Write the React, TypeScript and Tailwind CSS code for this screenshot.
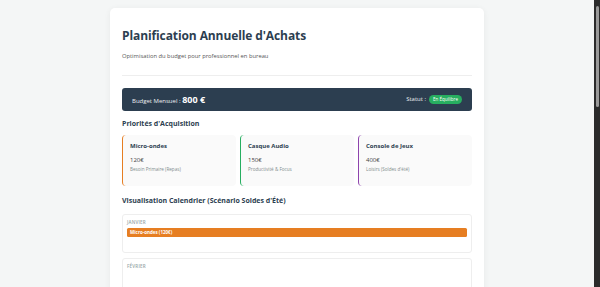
const priorities = [
  { name: 'Micro-ondes', price: '120€', note: 'Besoin Primaire (Repas)', border: 'border-[#e67e22]' },
  { name: 'Casque Audio', price: '150€', note: 'Productivité & Focus', border: 'border-[#27ae60]' },
  { name: 'Console de Jeux', price: '400€', note: 'Loisirs (Soldes d\'été)', border: 'border-[#8e44ad]' },
]

function MonthBox({ label, children }: { label: string; children?: React.ReactNode }) {
  return (
    <div className="h-[39px] rounded-[3px] border border-[#eeeeee] bg-white px-[4px] pt-[5.5px]">
      <div className="text-[4.5px] font-semibold uppercase leading-none tracking-[0.2px] text-[#95a5a6]">{label}</div>
      {children}
    </div>
  )
}

export default function App() {
  return (
    <div className="flex h-[287px] w-[600px] overflow-hidden font-['Open_Sans',sans-serif]">
      <div className="flex-1 overflow-hidden bg-[#f4f6f6] pt-[8px]">
        <div className="mx-auto w-[374px] rounded-[5px] bg-white px-[12px] pt-[22px] pb-[20px] shadow-[0_1px_6px_rgba(0,0,0,0.06)]">
          {/* Header */}
          <div className="border-b border-[#eeeeee] pb-[15px]">
            <h1 className="text-[12px] font-bold leading-none tracking-[-0.1px] text-[#2c3e50]">
              Planification Annuelle d'Achats
            </h1>
            <p className="mt-[12px] text-[5.8px] leading-none text-[#555555]">
              Optimisation du budget pour professionnel en bureau
            </p>
          </div>

          {/* Budget banner */}
          <div className="mt-[12px] flex h-[23px] items-center justify-between rounded-[3px] bg-[#2c3e50] px-[10px] text-white">
            <div className="flex items-baseline text-[6px] text-[#ecf0f1]">
              Budget Mensuel :&nbsp;<span className="text-[9px] font-bold text-white">800 €</span>
            </div>
            <div className="flex items-center gap-[3px] text-[6px] text-[#ecf0f1]">
              Statut :
              <span className="flex h-[9px] items-center rounded-full bg-[#27ae60] px-[4px] text-[4.5px] text-white">
                En Équilibre
              </span>
            </div>
          </div>

          {/* Priorities */}
          <h2 className="mt-[9.5px] text-[7px] font-bold leading-none text-[#2c3e50]">Priorités d'Acquisition</h2>
          <div className="mt-[7.5px] grid grid-cols-3 gap-[4px]">
            {priorities.map((p) => (
              <div key={p.name} className={`h-[51px] rounded-[4px] border-l-[1.5px] bg-[#fafafa] pl-[7px] pt-[8px] ${p.border}`}>
                <div className="text-[6px] font-bold leading-none text-[#2c3e50]">{p.name}</div>
                <div className="mt-[8px] text-[6px] leading-none text-[#444444]">{p.price}</div>
                <div className="mt-[3.75px] text-[4.6px] leading-none text-[#7f8c8d]">{p.note}</div>
              </div>
            ))}
          </div>

          {/* Calendar */}
          <h2 className="mt-[11.5px] text-[7px] font-bold leading-none text-[#2c3e50]">
            Visualisation Calendrier (Scénario Soldes d'Été)
          </h2>
          <div className="mt-[9.5px] flex flex-col gap-[5px]">
            <MonthBox label="Janvier">
              <div className="mt-[3px] flex h-[9px] items-center rounded-[1.5px] bg-[#e67e22] px-[3px] text-[4.5px] font-bold text-white">
                Micro-ondes (120€)
              </div>
            </MonthBox>
            <MonthBox label="Février" />
          </div>
        </div>
      </div>

      {/* Scrollbar */}
      <div className="flex w-[6px] flex-col bg-[#2b2b2b] py-[6px]">
        <div className="mx-auto h-[101px] w-[3px] rounded-full bg-[#9a9a9a]" />
      </div>
    </div>
  )
}
